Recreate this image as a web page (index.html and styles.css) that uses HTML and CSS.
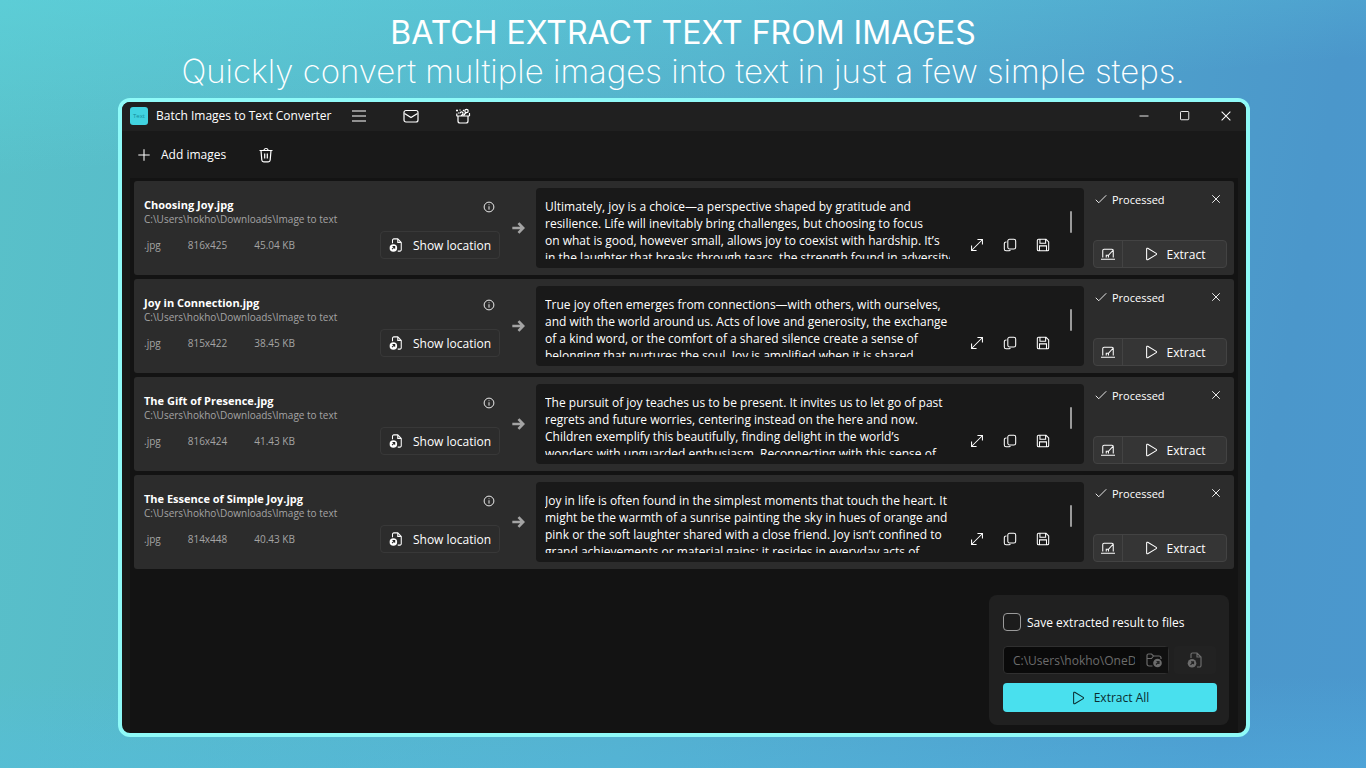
FILE: index.html
```html
<!DOCTYPE html>
<html lang="en">
<head>
    <meta charset="UTF-8">
    <meta name="viewport" content="width=device-width, initial-scale=1.0">
    <title>Batch Images to Text Converter</title>
    <link rel="stylesheet" href="styles.css">
</head>
<body>
    <!-- icon set -->
    <svg class="icon-defs" aria-hidden="true">
        <symbol id="i-menu" viewBox="0 0 16 16"><path d="M1 3h14M1 8h14M1 13h14"/></symbol>
        <symbol id="i-mail" viewBox="0 0 16 16"><rect x="1" y="2.500" width="14" height="11.500" rx="2"/><path d="M1.500 5.500L8 9.500l6.500-4"/></symbol>
        <symbol id="i-gift" viewBox="0 0 16 16"><path d="M1.500 8h13M3 8v5a2 2 0 0 0 2 2h6a2 2 0 0 0 2-2V8M1.800 5.500V8M14.500 5.500V8M5 5.500a1.500 1.500 0 1 1 2.500 1L6 8M8.500 7.500l2.500-3M1 2.500h2M2 1.500v2M5 1.500v1M8 2l1 1M14 5.500h1M3.500 4.500v1"/><circle cx="11.500" cy="3" r="1.700"/></symbol>
        <symbol id="i-plus" viewBox="0 0 16 16"><path d="M8 1.500v13M1.500 8h13"/></symbol>
        <symbol id="i-trash" viewBox="0 0 16 16"><path d="M1.500 3.500h13M6 3.500a2 2 0 0 1 4 0M3 3.500l.8 9.500a2 2 0 0 0 2 1.800h4.400a2 2 0 0 0 2-1.800l.8-9.500M6.700 6.500v5M9.300 6.500v5"/></symbol>
        <symbol id="i-info" viewBox="0 0 16 16"><circle cx="8" cy="8" r="6.500"/><path d="M8 7v4.500M8 4.500v1"/></symbol>
        <symbol id="i-file" viewBox="0 0 16 16"><path d="M4 6V2.500A1.500 1.500 0 0 1 5.500 1H10l4 4v8.500a1.500 1.500 0 0 1-1.500 1.500H10M10 1v4h4"/><circle class="fill" cx="5" cy="11.300" r="4.300"/><path class="cut" d="M3.500 12.800l3-3M4 9.800h2.500v2.500"/></symbol>
        <symbol id="i-folder" viewBox="0 0 16 16"><path d="M6.500 14H3a2 2 0 0 1-2-2V3.500A1.500 1.500 0 0 1 2.500 2h3l2 2H13a2 2 0 0 1 2 2v1M1 6.500h4.500l2-2.500"/><circle class="fill" cx="11.500" cy="11" r="4.300"/><path class="cut" d="M10 12.500l3-3M10.500 9.500H13V12"/></symbol>
        <symbol id="i-arrow" viewBox="0 0 16 16"><path d="M1.500 8h12M8.500 2.500L14 8l-5.500 5.500"/></symbol>
        <symbol id="i-expand" viewBox="0 0 16 16"><path d="M2 14L14 2M8.500 1.800h5.700v5.700M1.800 8.500v5.700h5.700"/></symbol>
        <symbol id="i-copy" viewBox="0 0 16 16"><rect x="5.500" y="1.500" width="9" height="11" rx="2"/><path d="M4 4.500h-.5a2 2 0 0 0-2 2v6a2 2 0 0 0 2 2H7a2 2 0 0 0 1.500-.7"/></symbol>
        <symbol id="i-save" viewBox="0 0 16 16"><path d="M3 1.500h8.500l3 3V13a1.500 1.500 0 0 1-1.500 1.500H3A1.500 1.500 0 0 1 1.500 13V3A1.500 1.500 0 0 1 3 1.500zM4.500 1.500V6h6.500V1.500M4 14.500V9h8v5.500"/></symbol>
        <symbol id="i-check" viewBox="0 0 16 16"><path d="M1 9l4 4L15 3"/></symbol>
        <symbol id="i-close" viewBox="0 0 16 16"><path d="M3 3l10 10M13 3L3 13"/></symbol>
        <symbol id="i-edit" viewBox="0 0 16 16"><path d="M0 14h16M2 12V4a1.500 1.500 0 0 1 1.500-1.500h9A1.500 1.500 0 0 1 14 4v8M6 12V9.500h2.500L13.500 4M8.500 9.500V12"/></symbol>
        <symbol id="i-play" viewBox="0 0 16 16"><path d="M3 2.300v11.400c0 .8.700 1.100 1.300.8l9.700-5.800c.5-.3.500-1 0-1.400L4.300 1.500C3.700 1.200 3 1.500 3 2.300z"/></symbol>
        <symbol id="i-min" viewBox="0 0 16 16"><path d="M2 8h12"/></symbol>
        <symbol id="i-max" viewBox="0 0 16 16"><rect x="2" y="2" width="11" height="11" rx="1"/></symbol>
    </svg>

    <header class="hero">
        <h1>BATCH EXTRACT TEXT FROM IMAGES</h1>
        <p>Quickly convert multiple images into text in just a few simple steps.</p>
    </header>

    <main class="window">
        <div class="titlebar">
            <span class="logo">Text</span>
            <span class="app-name">Batch Images to Text Converter</span>
            <nav class="menu">
                <button aria-label="Menu"><svg class="icon"><use href="#i-menu"/></svg></button>
                <button aria-label="Mail"><svg class="icon"><use href="#i-mail"/></svg></button>
                <button aria-label="What's new"><svg class="icon"><use href="#i-gift"/></svg></button>
            </nav>
            <div class="window-buttons">
                <button aria-label="Minimize"><svg class="icon small"><use href="#i-min"/></svg></button>
                <button aria-label="Maximize"><svg class="icon small"><use href="#i-max"/></svg></button>
                <button aria-label="Close"><svg class="icon"><use href="#i-close"/></svg></button>
            </div>
        </div>

        <div class="toolbar">
            <button class="add"><svg class="icon"><use href="#i-plus"/></svg>Add images</button>
            <button aria-label="Clear list"><svg class="icon large"><use href="#i-trash"/></svg></button>
        </div>

        <div class="content">
            <div class="list" id="list"></div>

            <form class="panel">
                <div class="save-option">
                    <input type="checkbox" id="saveFiles">
                    <label for="saveFiles">Save extracted result to files</label>
                </div>
                <div class="path-row">
                    <div class="path-box">
                        <input type="text" id="outPath" aria-label="Output folder" value="C:\Users\hokho\OneDrive" disabled>
                        <button type="button" aria-label="Choose folder" disabled><svg class="icon large"><use href="#i-folder"/></svg></button>
                    </div>
                    <button type="button" class="open-folder" aria-label="Open folder" disabled><svg class="icon large"><use href="#i-file"/></svg></button>
                </div>
                <button type="button" class="extract-all"><svg class="icon"><use href="#i-play"/></svg>Extract All</button>
            </form>
        </div>
    </main>

    <script>
        const folder = 'C:\\Users\\hokho\\Downloads\\Image to text';

        const images = [
            {
                name: 'Choosing Joy.jpg', size: '816x425', weight: '45.04 KB',
                lines: [
                    'Ultimately, joy is a choice—a perspective shaped by gratitude and',
                    'resilience. Life will inevitably bring challenges, but choosing to focus',
                    'on what is good, however small, allows joy to coexist with hardship. It’s',
                    'in the laughter that breaks through tears, the strength found in adversity'
                ]
            },
            {
                name: 'Joy in Connection.jpg', size: '815x422', weight: '38.45 KB',
                lines: [
                    'True joy often emerges from connections—with others, with ourselves,',
                    'and with the world around us. Acts of love and generosity, the exchange',
                    'of a kind word, or the comfort of a shared silence create a sense of',
                    'belonging that nurtures the soul. Joy is amplified when it is shared,'
                ]
            },
            {
                name: 'The Gift of Presence.jpg', size: '816x424', weight: '41.43 KB',
                lines: [
                    'The pursuit of joy teaches us to be present. It invites us to let go of past',
                    'regrets and future worries, centering instead on the here and now.',
                    'Children exemplify this beautifully, finding delight in the world’s',
                    'wonders with unguarded enthusiasm. Reconnecting with this sense of'
                ]
            },
            {
                name: 'The Essence of Simple Joy.jpg', size: '814x448', weight: '40.43 KB',
                lines: [
                    'Joy in life is often found in the simplest moments that touch the heart. It',
                    'might be the warmth of a sunrise painting the sky in hues of orange and',
                    'pink or the soft laughter shared with a close friend. Joy isn’t confined to',
                    'grand achievements or material gains; it resides in everyday acts of'
                ]
            }
        ];

        function icon(name, cls = '') {
            return `<svg class="icon ${cls}"><use href="#i-${name}"/></svg>`;
        }

        document.getElementById('list').innerHTML = images.map(img => `
            <article class="item">
                <div class="info">
                    <div class="details">
                        <h2>${img.name}</h2>
                        <p class="folder">${folder}</p>
                        <div class="meta"><span>.jpg</span><span>${img.size}</span><span>${img.weight}</span></div>
                    </div>
                    <div class="info-actions">
                        <button class="info-btn" aria-label="Details">${icon('info', 'small')}</button>
                        <button class="show-btn">${icon('file')}Show location</button>
                    </div>
                </div>
                ${icon('arrow', 'arrow')}
                <div class="result">
                    <textarea readonly aria-label="Text of ${img.name}">${img.lines.join('\n')}</textarea>
                    <div class="result-tools">
                        <button aria-label="Expand">${icon('expand')}</button>
                        <button aria-label="Copy">${icon('copy')}</button>
                        <button aria-label="Save">${icon('save')}</button>
                    </div>
                    <div class="thumb"></div>
                </div>
                <div class="side">
                    <div class="state">
                        ${icon('check', 'small')}<span>Processed</span>
                        <button aria-label="Remove">${icon('close', 'small')}</button>
                    </div>
                    <div class="split">
                        <button class="mode" aria-label="Mode">${icon('edit')}</button>
                        <button class="extract">${icon('play')}Extract</button>
                    </div>
                </div>
            </article>
        `).join('');
    </script>
</body>
</html>
```
FILE: styles.css
```css
* {
    box-sizing: border-box;
}
body {
    margin: 0;
    min-height: 100vh;
    display: flex;
    flex-direction: column;
    font-family: "Open Sans", "Noto Sans", sans-serif;
    font-size: 12px;
    color: #fff;
    background:
        linear-gradient(175deg, rgba(96,220,230,0.45) 0%, rgba(90,190,225,0) 20%),
        linear-gradient(0deg, rgba(84,190,236,0.3) 0%, rgba(84,190,236,0) 12%),
        linear-gradient(100deg, #59c1c9 0%, #54afcb 50%, #4b97cb 90%, #4b98ce 100%);
}
h1, h2, p {
    margin: 0;
}
button {
    display: flex;
    align-items: center;
    justify-content: center;
    padding: 0;
    border: none;
    background: none;
    color: inherit;
    font: inherit;
    cursor: pointer;
}
button:disabled {
    cursor: default;
}
.icon-defs {
    position: absolute;
    width: 0;
    height: 0;
}
.icon {
    width: 14px;
    height: 14px;
    flex: none;
    fill: none;
    stroke: currentColor;
    stroke-width: 1.2;
}
.icon.small {
    width: 12px;
    height: 12px;
}
.icon.large {
    width: 16px;
    height: 16px;
}
.fill {
    fill: currentColor;
    stroke: none;
}
.cut {
    stroke: #222;
}

/* heading */
.hero {
    height: 98px;
    padding-top: 13px;
    text-align: center;
    white-space: nowrap;
    font-family: Inter, sans-serif;
}
.hero h1 {
    font-size: 32px;
    font-weight: 400;
    line-height: 40px;
}
.hero p {
    font-size: 33px;
    font-weight: 200;
    line-height: 36px;
}

/* window */
.window {
    flex: 1;
    display: flex;
    flex-direction: column;
    margin: 0 116px 31px 118px;
    border: 4px solid #8ffaf8;
    border-radius: 12px;
    background: #191919;
    overflow: hidden;
}
.titlebar {
    display: flex;
    align-items: center;
    height: 29px;
    padding: 0 0 2px 8px;
    background: #202020;
}
.logo {
    width: 18px;
    height: 18px;
    border-radius: 3px;
    background: #41d3e0;
    color: #158d9b;
    font-size: 6px;
    line-height: 18px;
    text-align: center;
}
.app-name {
    margin-left: 8px;
}
.menu {
    display: flex;
    margin-left: 12px;
}
.menu button {
    width: 32px;
    margin-right: 20px;
}
.menu .icon {
    width: 16px;
    height: 16px;
}
.window-buttons {
    display: flex;
    margin-left: auto;
}
.window-buttons button {
    width: 41px;
    height: 26px;
}
.toolbar {
    display: flex;
    gap: 32px;
    height: 47px;
    padding: 0 15px;
}
.toolbar .add {
    gap: 10px;
}
.content {
    flex: 1;
    display: flex;
    flex-direction: column;
    margin: 0 8px;
    padding: 3px 4px 8px;
    background: #131313;
}

/* image rows */
.list {
    display: grid;
    gap: 4px;
}
.item {
    display: grid;
    grid-template-columns: 356px 36px 1fr 143px;
    height: 94px;
    padding: 7px 7px 7px 10px;
    border-radius: 3px;
    background: #2c2c2c;
}
.info {
    display: flex;
    justify-content: space-between;
}
.details {
    padding-top: 10px;
    font-size: 10px;
    line-height: 14px;
}
.details h2 {
    font-size: 11px;
    font-weight: 700;
}
.folder, .meta {
    color: #a4a4a4;
}
.meta {
    display: flex;
    gap: 27px;
    margin-top: 12px;
}
.info-actions {
    display: flex;
    flex-direction: column;
    align-items: flex-end;
    padding-top: 13px;
}
.info-btn {
    margin-right: 5px;
}
.show-btn {
    gap: 10px;
    width: 120px;
    height: 28px;
    margin-top: 18px;
    border: 1px solid #383838;
    border-radius: 4px;
}
.arrow {
    align-self: center;
    justify-self: center;
    color: #a4a4a4;
    stroke-width: 3;
}
.result {
    display: flex;
    padding: 10px 12px 9px 9px;
    border-radius: 4px;
    background: #191919;
}
.result textarea {
    flex: 1;
    min-width: 0;
    padding: 0;
    border: none;
    outline: none;
    resize: none;
    overflow: hidden;
    background: none;
    color: #fff;
    font: inherit;
    line-height: 17px;
    white-space: pre;
}
.result-tools {
    display: flex;
    align-items: flex-end;
    gap: 19px;
    margin: 0 20px 7px;
}
.thumb {
    width: 2px;
    height: 22px;
    margin-top: 13px;
    border-radius: 1px;
    background: #9a9a9a;
}
.side {
    display: flex;
    flex-direction: column;
    justify-content: space-between;
    margin-left: 9px;
}
.state {
    display: flex;
    align-items: center;
    gap: 5px;
    height: 22px;
    padding: 0 5px 0 2px;
    font-size: 11px;
}
.state button {
    margin-left: auto;
}
.split {
    display: flex;
    height: 28px;
    border: 1px solid #434343;
    border-radius: 4px;
    background: #353535;
}
.mode {
    width: 29px;
    border-right: 1px solid #434343;
}
.extract {
    flex: 1;
    gap: 9px;
}

/* save panel */
.panel {
    width: 240px;
    margin: auto 5px 0 auto;
    padding: 18px 12px 13px 14px;
    border-radius: 8px;
    background: #202020;
}
.save-option {
    display: flex;
    align-items: center;
    gap: 6px;
    height: 18px;
}
.save-option input {
    appearance: none;
    width: 18px;
    height: 18px;
    margin: 0;
    border: 1px solid #9a9a9a;
    border-radius: 4px;
    background: #1c1c1c;
}
.save-option input:checked {
    background: #49e0ee;
}
.path-row {
    display: flex;
    gap: 5px;
    margin: 15px 0 9px;
}
.path-box {
    display: flex;
    width: 166px;
    height: 28px;
    border: 1px solid #303030;
    border-radius: 4px;
    background: #0a0a0a;
    color: #6c6c6c;
}
.path-box input {
    flex: 1;
    min-width: 0;
    margin: 0 5px 0 9px;
    padding: 0;
    border: none;
    background: none;
    color: #6c6c6c;
    font: inherit;
}
.path-box button {
    width: 28px;
    background: #101010;
}
.open-folder {
    width: 42px;
    border-radius: 4px;
    background: #222;
    color: #6c6c6c;
}
.extract-all {
    gap: 9px;
    width: 100%;
    height: 29px;
    border-radius: 4px;
    background: #49e0ee;
    color: #0b2d30;
}
```
